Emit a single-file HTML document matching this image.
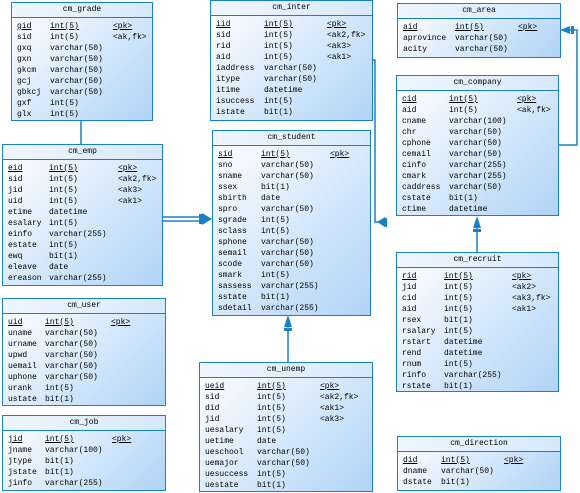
<!DOCTYPE html>
<html><head><meta charset="utf-8"><style>
body{margin:0;width:580px;height:493px;background:#fff;position:relative;overflow:hidden;font-family:"Liberation Mono",monospace;font-size:8px;color:#000}
.tb{position:absolute;border:1px solid #1a82c4;background:linear-gradient(135deg,#ffffff 0%,#dcecfc 45%,#b0d3f6 100%);box-sizing:border-box}
.h{height:14px;line-height:14px;text-align:center;border-bottom:1px solid #1a82c4;background:linear-gradient(90deg,#eef6ff,#d6e9fc)}
.rs{padding-top:3px}
.r{position:relative;height:11px;line-height:11px;white-space:nowrap}
.r span{position:absolute}
.r span:nth-child(1){left:5px}
.r span:nth-child(2){left:var(--a)}
.r span:nth-child(3){left:var(--b)}
.u{text-decoration:underline}
svg{position:absolute;left:0;top:0}
</style></head><body>
<svg width="580" height="493">
<g stroke="#1a82c4" stroke-width="1.5" fill="none">
<line x1="81" y1="120" x2="81" y2="144"/>
<line x1="162" y1="217" x2="206" y2="217"/><line x1="162" y1="221" x2="206" y2="221"/>
<polyline points="372,60 375,60 375,222 380,222"/>
<polyline points="558,145 577,145 577,30 566,30"/>
<line x1="477" y1="252" x2="477" y2="222"/>
<line x1="288" y1="362" x2="288" y2="322"/>
</g>
<g fill="#1a82c4">
<polygon points="202,213 212,219 202,225"/><rect x="199" y="214" width="3" height="10"/>
<polygon points="377,222 385,217 385,227"/><rect x="385" y="218" width="2" height="9"/>
<polygon points="570,26 560,30 570,34"/><rect x="571" y="26" width="3" height="8"/>
<polygon points="473,228 477,216 481,228"/><rect x="473" y="229" width="8" height="3"/>
<polygon points="284,327 288,315 292,327"/><rect x="284" y="328" width="8" height="3"/>
</g>
</svg>

<div class="tb" style="left:11px;top:2px;width:142px;height:119px;--a:38px;--b:101px"><div class="h">cm_grade</div><div class="rs">
<div class="r"><span class="u">gid</span><span class="u">int(5)</span><span class="u">&lt;pk&gt;</span></div>
<div class="r"><span>sid</span><span>int(5)</span><span>&lt;ak,fk&gt;</span></div>
<div class="r"><span>gxq</span><span>varchar(50)</span></div>
<div class="r"><span>gxn</span><span>varchar(50)</span></div>
<div class="r"><span>gkcm</span><span>varchar(50)</span></div>
<div class="r"><span>gcj</span><span>varchar(50)</span></div>
<div class="r"><span>gbkcj</span><span>varchar(50)</span></div>
<div class="r"><span>gxf</span><span>int(5)</span></div>
<div class="r"><span>glx</span><span>int(5)</span></div>
</div></div>

<div class="tb" style="left:2px;top:144px;width:161px;height:142px;--a:46px;--b:115px"><div class="h">cm_emp</div><div class="rs">
<div class="r"><span class="u">eid</span><span class="u">int(5)</span><span class="u">&lt;pk&gt;</span></div>
<div class="r"><span>sid</span><span>int(5)</span><span>&lt;ak2,fk&gt;</span></div>
<div class="r"><span>jid</span><span>int(5)</span><span>&lt;ak3&gt;</span></div>
<div class="r"><span>uid</span><span>int(5)</span><span>&lt;ak1&gt;</span></div>
<div class="r"><span>etime</span><span>datetime</span></div>
<div class="r"><span>esalary</span><span>int(5)</span></div>
<div class="r"><span>einfo</span><span>varchar(255)</span></div>
<div class="r"><span>estate</span><span>int(5)</span></div>
<div class="r"><span>ewq</span><span>bit(1)</span></div>
<div class="r"><span>eleave</span><span>date</span></div>
<div class="r"><span>ereason</span><span>varchar(255)</span></div>
</div></div>

<div class="tb" style="left:2px;top:298px;width:164px;height:108px;--a:42px;--b:108px"><div class="h">cm_user</div><div class="rs">
<div class="r"><span class="u">uid</span><span class="u">int(5)</span><span class="u">&lt;pk&gt;</span></div>
<div class="r"><span>uname</span><span>varchar(50)</span></div>
<div class="r"><span>urname</span><span>varchar(50)</span></div>
<div class="r"><span>upwd</span><span>varchar(50)</span></div>
<div class="r"><span>uemail</span><span>varchar(50)</span></div>
<div class="r"><span>uphone</span><span>varchar(50)</span></div>
<div class="r"><span>urank</span><span>int(5)</span></div>
<div class="r"><span>ustate</span><span>bit(1)</span></div>
</div></div>

<div class="tb" style="left:2px;top:415px;width:164px;height:76px;--a:42px;--b:109px"><div class="h">cm_job</div><div class="rs">
<div class="r"><span class="u">jid</span><span class="u">int(5)</span><span class="u">&lt;pk&gt;</span></div>
<div class="r"><span>jname</span><span>varchar(100)</span></div>
<div class="r"><span>jtype</span><span>bit(1)</span></div>
<div class="r"><span>jstate</span><span>bit(1)</span></div>
<div class="r"><span>jinfo</span><span>varchar(255)</span></div>
</div></div>

<div class="tb" style="left:210px;top:0px;width:163px;height:121px;--a:53px;--b:116px"><div class="h">cm_inter</div><div class="rs">
<div class="r"><span class="u">iid</span><span class="u">int(5)</span><span class="u">&lt;pk&gt;</span></div>
<div class="r"><span>sid</span><span>int(5)</span><span>&lt;ak2,fk&gt;</span></div>
<div class="r"><span>rid</span><span>int(5)</span><span>&lt;ak3&gt;</span></div>
<div class="r"><span>aid</span><span>int(5)</span><span>&lt;ak1&gt;</span></div>
<div class="r"><span>iaddress</span><span>varchar(50)</span></div>
<div class="r"><span>itype</span><span>varchar(50)</span></div>
<div class="r"><span>itime</span><span>datetime</span></div>
<div class="r"><span>isuccess</span><span>int(5)</span></div>
<div class="r"><span>istate</span><span>bit(1)</span></div>
</div></div>

<div class="tb" style="left:212px;top:130px;width:159px;height:186px;--a:48px;--b:117px"><div class="h">cm_student</div><div class="rs">
<div class="r"><span class="u">sid</span><span class="u">int(5)</span><span class="u">&lt;pk&gt;</span></div>
<div class="r"><span>sno</span><span>varchar(50)</span></div>
<div class="r"><span>sname</span><span>varchar(50)</span></div>
<div class="r"><span>ssex</span><span>bit(1)</span></div>
<div class="r"><span>sbirth</span><span>date</span></div>
<div class="r"><span>spro</span><span>varchar(50)</span></div>
<div class="r"><span>sgrade</span><span>int(5)</span></div>
<div class="r"><span>sclass</span><span>int(5)</span></div>
<div class="r"><span>sphone</span><span>varchar(50)</span></div>
<div class="r"><span>semail</span><span>varchar(50)</span></div>
<div class="r"><span>scode</span><span>varchar(50)</span></div>
<div class="r"><span>smark</span><span>int(5)</span></div>
<div class="r"><span>sassess</span><span>varchar(255)</span></div>
<div class="r"><span>sstate</span><span>bit(1)</span></div>
<div class="r"><span>sdetail</span><span>varchar(255)</span></div>
</div></div>

<div class="tb" style="left:199px;top:362px;width:174px;height:130px;--a:57px;--b:120px"><div class="h">cm_unemp</div><div class="rs">
<div class="r"><span class="u">ueid</span><span class="u">int(5)</span><span class="u">&lt;pk&gt;</span></div>
<div class="r"><span>sid</span><span>int(5)</span><span>&lt;ak2,fk&gt;</span></div>
<div class="r"><span>did</span><span>int(5)</span><span>&lt;ak1&gt;</span></div>
<div class="r"><span>jid</span><span>int(5)</span><span>&lt;ak3&gt;</span></div>
<div class="r"><span>uesalary</span><span>int(5)</span></div>
<div class="r"><span>uetime</span><span>date</span></div>
<div class="r"><span>ueschool</span><span>varchar(50)</span></div>
<div class="r"><span>uemajor</span><span>varchar(50)</span></div>
<div class="r"><span>uesuccess</span><span>int(5)</span></div>
<div class="r"><span>uestate</span><span>bit(1)</span></div>
</div></div>

<div class="tb" style="left:397px;top:3px;width:164px;height:55px;--a:57px;--b:120px"><div class="h">cm_area</div><div class="rs">
<div class="r"><span class="u">aid</span><span class="u">int(5)</span><span class="u">&lt;pk&gt;</span></div>
<div class="r"><span>aprovince</span><span>varchar(50)</span></div>
<div class="r"><span>acity</span><span>varchar(50)</span></div>
</div></div>

<div class="tb" style="left:396px;top:75px;width:163px;height:141px;--a:52px;--b:120px"><div class="h">cm_company</div><div class="rs">
<div class="r"><span class="u">cid</span><span class="u">int(5)</span><span class="u">&lt;pk&gt;</span></div>
<div class="r"><span>aid</span><span>int(5)</span><span>&lt;ak,fk&gt;</span></div>
<div class="r"><span>cname</span><span>varchar(100)</span></div>
<div class="r"><span>chr</span><span>varchar(50)</span></div>
<div class="r"><span>cphone</span><span>varchar(50)</span></div>
<div class="r"><span>cemail</span><span>varchar(50)</span></div>
<div class="r"><span>cinfo</span><span>varchar(255)</span></div>
<div class="r"><span>cmark</span><span>varchar(255)</span></div>
<div class="r"><span>caddress</span><span>varchar(50)</span></div>
<div class="r"><span>cstate</span><span>bit(1)</span></div>
<div class="r"><span>ctime</span><span>datetime</span></div>
</div></div>

<div class="tb" style="left:396px;top:252px;width:163px;height:140px;--a:47px;--b:115px"><div class="h">cm_recruit</div><div class="rs">
<div class="r"><span class="u">rid</span><span class="u">int(5)</span><span class="u">&lt;pk&gt;</span></div>
<div class="r"><span>jid</span><span>int(5)</span><span>&lt;ak2&gt;</span></div>
<div class="r"><span>cid</span><span>int(5)</span><span>&lt;ak3,fk&gt;</span></div>
<div class="r"><span>aid</span><span>int(5)</span><span>&lt;ak1&gt;</span></div>
<div class="r"><span>rsex</span><span>bit(1)</span></div>
<div class="r"><span>rsalary</span><span>int(5)</span></div>
<div class="r"><span>rstart</span><span>datetime</span></div>
<div class="r"><span>rend</span><span>datetime</span></div>
<div class="r"><span>rnum</span><span>int(5)</span></div>
<div class="r"><span>rinfo</span><span>varchar(255)</span></div>
<div class="r"><span>rstate</span><span>bit(1)</span></div>
</div></div>

<div class="tb" style="left:397px;top:436px;width:164px;height:55px;--a:43px;--b:106px"><div class="h">cm_direction</div><div class="rs">
<div class="r"><span class="u">did</span><span class="u">int(5)</span><span class="u">&lt;pk&gt;</span></div>
<div class="r"><span>dname</span><span>varchar(50)</span></div>
<div class="r"><span>dstate</span><span>bit(1)</span></div>
</div></div>
</body></html>
